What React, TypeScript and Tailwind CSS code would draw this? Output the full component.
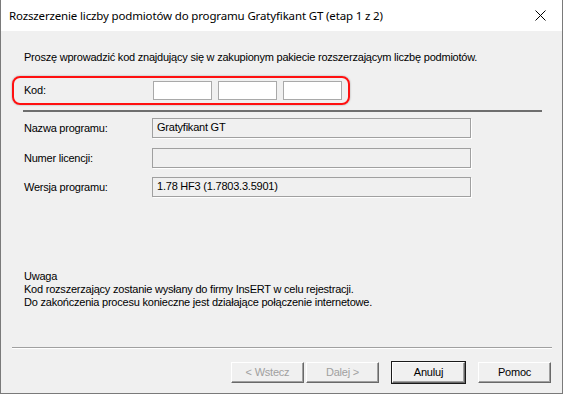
const fields = [
  { label: "Nazwa programu:", value: "Gratyfikant GT", mt: "mt-[6px]" },
  { label: "Numer licencji:", value: "", mt: "mt-[10px]" },
  { label: "Wersja programu:", value: "1.78 HF3 (1.7803.3.5901)", mt: "mt-[9px]" },
];

function WinButton({
  label,
  disabled,
  isDefault,
}: {
  label: string;
  disabled?: boolean;
  isDefault?: boolean;
}) {
  return (
    <div
      className={`w-[75px] h-[23px] ${
        isDefault ? "border border-[#1a1a1a]" : "border border-transparent"
      }`}
    >
      <div className="w-full h-full border-t border-l border-t-white border-l-white border-r border-b border-r-[#696969] border-b-[#696969] bg-[#f0f0f0] shadow-[inset_-1px_-1px_0_#a0a0a0]">
        <div
          className={`w-full h-full flex items-center justify-center text-[11px] leading-none ${
            disabled ? "text-[#a0a0a0]" : "text-black"
          }`}
        >
          {label}
        </div>
      </div>
    </div>
  );
}

export default function App() {
  return (
    <div className="w-[563px] h-[394px] bg-[#f0f0f0] border-x border-b border-[#7a7a7a] flex flex-col relative font-['Liberation_Sans',Arial,sans-serif]">
      {/* Title bar */}
      <div className="h-[31px] bg-white flex items-center justify-between pl-[8px] pr-[16px] shrink-0">
        <span className="text-[11.5px] text-black font-['Noto_Sans',sans-serif] tracking-[-0.15px]">
          Rozszerzenie liczby podmiotów do programu Gratyfikant GT (etap 1 z 2)
        </span>
        <svg width="11" height="11" viewBox="0 0 11 11" className="text-black">
          <path d="M0.5 0.5 L10.5 10.5 M10.5 0.5 L0.5 10.5" stroke="currentColor" strokeWidth="1" />
        </svg>
      </div>

      {/* Body */}
      <div className="flex flex-col text-[11px] leading-[13px] tracking-[-0.22px] text-black">
        <p className="pt-[20px] pl-[23px]">
          Proszę wprowadzić kod znajdujący się w zakupionym pakiecie rozszerzającym liczbę podmiotów.
        </p>

        <div className="mt-[17px] pl-[23px] flex items-center h-[19px]">
          <span className="w-[129px]">Kod:</span>
          <div className="flex gap-[6px]">
            <div className="w-[59px] h-[19px] bg-white border border-[#a9a9a9]" />
            <div className="w-[59px] h-[19px] bg-white border border-[#a9a9a9]" />
            <div className="w-[59px] h-[19px] bg-white border border-[#a9a9a9]" />
          </div>
        </div>

        <div className="mt-[10px] ml-[22px] w-[519px] h-[2px] bg-[#6e6e6e]" />

        {fields.map((f) => (
          <div key={f.label} className={`${f.mt} pl-[23px] flex items-center h-[20px]`}>
            <span className="w-[128px]">{f.label}</span>
            <div className="w-[319px] h-[20px] border border-[#a0a0a0] shadow-[1px_1px_0_#ffffff] flex items-center pl-[4px] pb-[2px]">
              {f.value}
            </div>
          </div>
        ))}

        <div className="mt-[73px] pl-[23px]">
          <p>Uwaga</p>
          <p>Kod rozszerzający zostanie wysłany do firmy InsERT w celu rejestracji.</p>
          <p>Do zakończenia procesu konieczne jest działające połączenie internetowe.</p>
        </div>

        <div className="mt-[38px] ml-[11px] w-[540px] border-t border-[#a0a0a0] border-b border-b-white" />

        <div className="mt-[12px] pr-[10px] flex justify-end">
          <WinButton label="< Wstecz" disabled />
          <WinButton label="Dalej >" disabled />
          <div className="w-[11px]" />
          <WinButton label="Anuluj" isDefault />
          <div className="w-[11px]" />
          <WinButton label="Pomoc" />
        </div>
      </div>

      {/* Annotation highlight */}
      <div className="absolute left-[11px] top-[76px] w-[338px] h-[29px] rounded-[8px] border-2 border-[#ff1010] shadow-[0_0_2px_rgba(0,0,0,0.35)] pointer-events-none" />
    </div>
  );
}
